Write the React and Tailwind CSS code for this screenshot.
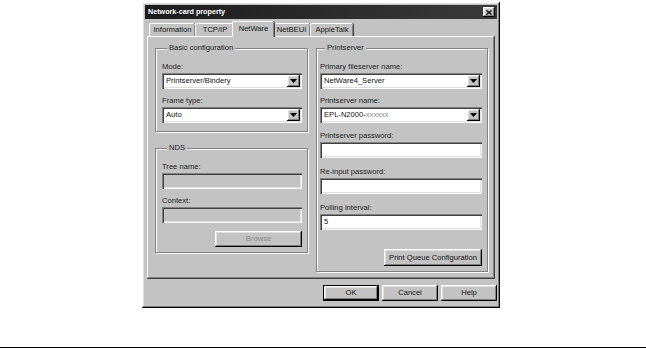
import React from "react";

const RAISED =
  "shadow-[inset_-1px_-1px_0_#000,inset_1px_1px_0_#fff,inset_-2px_-2px_0_#808080,inset_2px_2px_0_#dfdfdf]";
const SUNKEN =
  "shadow-[inset_1px_1px_0_#808080,inset_2px_2px_0_#404040,inset_-1px_-1px_0_#fff,inset_-2px_-2px_0_#dfdfdf]";

function Label({ children }) {
  return <div className="leading-[8px] h-[8px] mb-[2px] whitespace-nowrap text-[#1a1a1a]">{children}</div>;
}

function Combo({ children }) {
  return (
    <div className={"h-[16px] bg-white flex items-center pl-[4px] pr-[2px] " + SUNKEN}>
      <span className="flex-1 leading-[8px] whitespace-nowrap overflow-hidden text-[#111]">{children}</span>
      <div className={"w-[13px] h-[12px] bg-[#c3c3c3] flex items-center justify-center " + RAISED}>
        <svg width="7" height="4" viewBox="0 0 7 4">
          <path d="M0 0h7L3.5 4z" fill="#000" />
        </svg>
      </div>
    </div>
  );
}

function Field({ children, disabled }) {
  return (
    <div
      className={
        "h-[16px] flex items-center pl-[4px] leading-[8px] text-[#111] " +
        (disabled ? "bg-[#c3c3c3] " : "bg-white ") +
        SUNKEN
      }
    >
      {children}
    </div>
  );
}

function Button({ children, className = "", disabled }) {
  return (
    <div
      className={
        "flex items-center justify-center leading-[8px] bg-[#c3c3c3] " +
        RAISED +
        " " +
        (disabled ? "text-[#8a8a8a] " : "text-[#111] ") +
        className
      }
    >
      {children}
    </div>
  );
}

function Group({ title, children, className = "" }) {
  return (
    <fieldset
      className={
        "border border-[#808080] shadow-[inset_1px_1px_0_#fff,1px_1px_0_#fff] flex flex-col " + className
      }
    >
      <legend className="ml-[5px] px-[2px] leading-[8px] h-[8px] bg-[#c3c3c3] text-[#1a1a1a]">{title}</legend>
      {children}
    </fieldset>
  );
}

function Tab({ children, selected, w }) {
  if (selected) {
    return (
      <div
        className={
          "relative z-10 -mx-[2px] -mb-px h-[16px] bg-[#c3c3c3] border-t border-l border-white rounded-t-[2px] shadow-[inset_-1px_0_0_#808080,1px_0_0_#404040] flex items-start justify-center pt-[3px] leading-[8px] text-[#111] " +
          w
        }
      >
        {children}
      </div>
    );
  }
  return (
    <div
      className={
        "h-[13px] bg-[#c3c3c3] border-t border-l border-white rounded-t-[2px] shadow-[inset_-1px_0_0_#808080,1px_0_0_#404040] flex items-start justify-center pt-[2px] leading-[8px] text-[#111] " +
        w
      }
    >
      {children}
    </div>
  );
}

export default function App() {
  return (
    <div className="w-[646px] h-[348px] bg-white font-['Liberation_Sans',Arial,sans-serif] text-[7.6px] overflow-hidden">
      <div className="pt-[2px] pl-[142px]">
        <div className={"w-[358px] h-[306px] bg-[#c3c3c3] p-[3px] flex flex-col " + RAISED}>
          {/* title bar */}
          <div className="h-[14px] bg-gradient-to-r from-[#1c1c1c] to-[#3a3a3a] flex items-center justify-between pl-[3px] pr-[2px]">
            <span className="text-white font-bold text-[7.2px] leading-[8px] whitespace-nowrap">Network-card property</span>
            <div className={"w-[12px] h-[10px] bg-[#c3c3c3] flex items-center justify-center " + RAISED}>
              <svg width="6" height="5" viewBox="0 0 6 5">
                <path d="M0.5 0.5L5.5 4.5M5.5 0.5L0.5 4.5" stroke="#000" strokeWidth="1.3" />
              </svg>
            </div>
          </div>

          <div className="px-[2px] flex flex-col">
            {/* tabs */}
            <div className="mt-[2px] h-[15px] flex items-end pl-[2px]">
              <Tab w="w-[46px]">Information</Tab>
              <Tab w="w-[39px]">TCP/IP</Tab>
              <Tab w="w-[42px]" selected>
                NetWare
              </Tab>
              <Tab w="w-[38px]">NetBEUI</Tab>
              <Tab w="w-[43px]">AppleTalk</Tab>
            </div>

            {/* panel */}
            <div className="h-[243px] bg-[#c3c3c3] pt-[8px] pl-[8px] flex gap-[8px] shadow-[inset_-1px_-1px_0_#404040,inset_1px_1px_0_#fff,inset_-2px_-2px_0_#808080]">
              <div className="w-[153px] flex flex-col">
                <Group title="Basic configuration" className="pl-[6px] pr-[5px] pt-[11px] pb-[8px]">
                  <Label>Mode:</Label>
                  <Combo>Printserver/Bindery</Combo>
                  <div className="h-[8px]" />
                  <Label>Frame type:</Label>
                  <Combo>Auto</Combo>
                </Group>
                <Group title="NDS" className="mt-[12px] pl-[6px] pr-[5px] pt-[11px] pb-[5px]">
                  <Label>Tree name:</Label>
                  <Field disabled />
                  <div className="h-[8px]" />
                  <Label>Context:</Label>
                  <Field disabled />
                  <Button disabled className="mt-[8px] self-end w-[87px] h-[16px]">
                    Browse
                  </Button>
                </Group>
              </div>

              <div className="w-[172px] flex flex-col">
                <Group title="Printserver" className="pl-[3px] pr-[5px] pt-[11px] pb-[5px]">
                  <Label>Primary fileserver name:</Label>
                  <Combo>NetWare4_Server</Combo>
                  <div className="h-[8px]" />
                  <Label>Printserver name:</Label>
                  <Combo>
                    EPL-N2000-<span className="text-[#8a8a8a]">xxxxxx</span>
                  </Combo>
                  <div className="h-[9px]" />
                  <Label>Printserver password:</Label>
                  <Field />
                  <div className="h-[10px]" />
                  <Label>Re-input password:</Label>
                  <Field />
                  <div className="h-[10px]" />
                  <Label>Polling interval:</Label>
                  <Field>5</Field>
                  <Button className="mt-[19px] self-end w-[98px] h-[17px]">Print Queue Configuration</Button>
                </Group>
              </div>
            </div>

            {/* buttons */}
            <div className="mt-[6px] flex justify-end gap-[3px] -mr-[2px]">
              <div className="w-[56px] h-[16px] border border-black">
                <Button className="w-full h-full">OK</Button>
              </div>
              <Button className="w-[56px] h-[16px]">Cancel</Button>
              <Button className="w-[56px] h-[16px]">Help</Button>
            </div>
          </div>
        </div>
      </div>
      <div className="mt-[39px] h-px bg-black" />
    </div>
  );
}
